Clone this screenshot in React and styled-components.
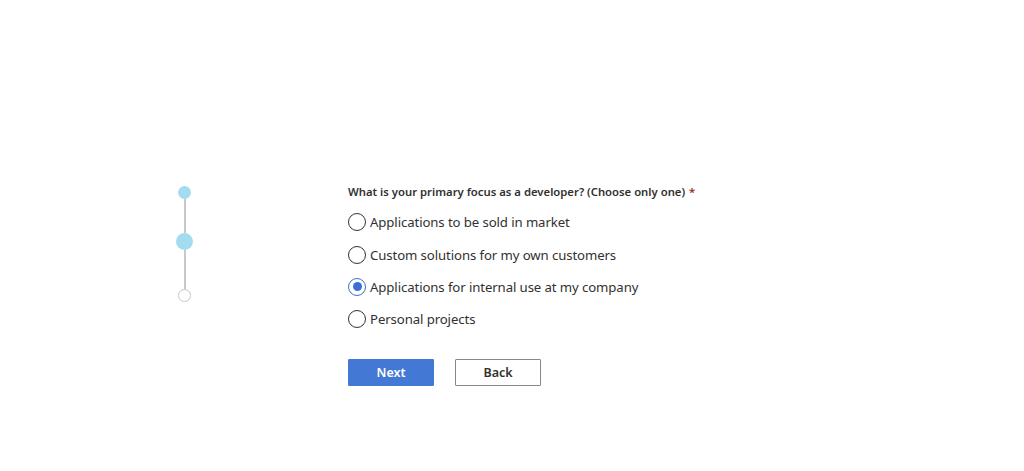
import React, { useState } from "react";
import styled, { createGlobalStyle } from "styled-components";

const Global = createGlobalStyle`
  html, body { margin: 0; padding: 0; background: #ffffff; }
  body { font-family: "Noto Sans", "Open Sans", Arial, sans-serif; color: #323130; }
  * { box-sizing: border-box; }
`;

const Page = styled.div`
  width: 1024px;
  height: 471px;
  display: flex;
  align-items: flex-start;
  padding: 186px 0 0 178px;
`;

const Stepper = styled.div`
  display: flex;
  flex-direction: column;
  align-items: center;
  width: 17px;
  margin-left: -2px;
`;

const Dot = styled.div`
  width: ${(p) => p.$size}px;
  height: ${(p) => p.$size}px;
  border-radius: 50%;
  background: ${(p) => (p.$hollow ? "#ffffff" : "#a3dcef")};
  border: ${(p) => (p.$hollow ? "1px solid #c6c6c6" : "none")};
  flex-shrink: 0;
`;

const Line = styled.div`
  width: 2px;
  height: ${(p) => p.$h}px;
  background: #c8c8c8;
`;

const Form = styled.div`
  margin-left: 155px;
  display: flex;
  flex-direction: column;
`;

const Question = styled.div`
  font-size: 11.3px;
  font-weight: 600;
  line-height: 12px;
  color: #323130;
  margin-top: 0;
  margin-bottom: 8px;
`;

const Required = styled.span`
  color: #a4262c;
  margin-left: 4px;
`;

const Options = styled.div`
  display: flex;
  flex-direction: column;
`;

const Option = styled.label`
  display: flex;
  align-items: center;
  height: 32.4px;
  cursor: pointer;
`;

const Radio = styled.span`
  width: 18px;
  height: 18px;
  border-radius: 50%;
  border: 1.5px solid ${(p) => (p.$checked ? "#3b6fd6" : "#333333")};
  display: flex;
  align-items: center;
  justify-content: center;
  margin-right: 4px;
  flex-shrink: 0;
  &::after {
    content: "";
    width: 9px;
    height: 9px;
    border-radius: 50%;
    background: #3b6fd6;
    display: ${(p) => (p.$checked ? "block" : "none")};
  }
`;

const OptionText = styled.span`
  font-size: 13.2px;
  color: #323130;
  letter-spacing: -0.1px;
`;

const Buttons = styled.div`
  display: flex;
  gap: 21px;
  margin-top: 23px;
`;

const Button = styled.button`
  width: 86px;
  height: 27px;
  font-family: inherit;
  font-size: 12.5px;
  font-weight: 600;
  border-radius: 1px;
  cursor: pointer;
  background: ${(p) => (p.$primary ? "#4478d5" : "#ffffff")};
  color: ${(p) => (p.$primary ? "#ffffff" : "#323130")};
  border: 1px solid ${(p) => (p.$primary ? "#4478d5" : "#8a8886")};
  padding: 0;
`;

const options = [
  "Applications to be sold in market",
  "Custom solutions for my own customers",
  "Applications for internal use at my company",
  "Personal projects",
];

export default function App() {
  const [sel, setSel] = useState(2);
  return (
    <>
      <Global />
      <Page>
        <Stepper>
          <Dot $size={13} />
          <Line $h={34} />
          <Dot $size={17} />
          <Line $h={39} />
          <Dot $size={13} $hollow />
        </Stepper>
        <Form>
          <Question>
            What is your primary focus as a developer? (Choose only one)
            <Required>*</Required>
          </Question>
          <Options>
            {options.map((o, i) => (
              <Option key={o} onClick={() => setSel(i)}>
                <Radio $checked={sel === i} />
                <OptionText>{o}</OptionText>
              </Option>
            ))}
          </Options>
          <Buttons>
            <Button $primary>Next</Button>
            <Button>Back</Button>
          </Buttons>
        </Form>
      </Page>
    </>
  );
}
